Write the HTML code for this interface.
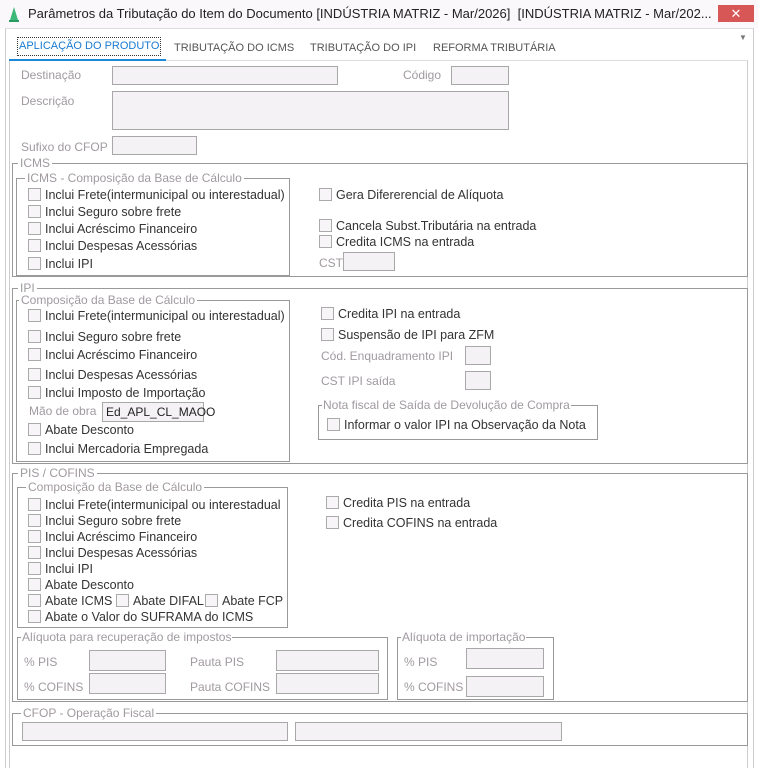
<!DOCTYPE html>
<html><head><meta charset="utf-8"><style>
*{margin:0;padding:0;box-sizing:border-box}
body{width:758px;height:768px;background:#fff;font-family:"Liberation Sans",sans-serif;font-size:12px;color:#333;position:relative;overflow:hidden}
.a{position:absolute;white-space:nowrap}
.l{color:#a09aa0}
.in{position:absolute;background:#f5f2f5;border:1px solid #a8a8a8}
.g{position:absolute;border:1px solid #999}
.gt{position:absolute;top:-8px;background:#fff;color:#a09aa0;padding:0 2px;line-height:14px}
.cb{position:absolute;white-space:nowrap;line-height:14px;font-size:12.5px}
.cb:before{content:"";display:inline-block;width:11px;height:11px;border:1px solid #aaa;background:#f7f5f7;vertical-align:-2px;margin-right:4px}
.tab{position:absolute;top:42px;color:#555;font-size:11px}
</style></head><body>
<div class="a" style="left:0;top:0;width:758px;height:28px;background:#fbf8fc"></div>
<svg class="a" style="left:8px;top:7px" width="12" height="15"><polygon points="6,0 10,13 2,13" fill="#3cb878"/><rect x="1" y="13" width="10" height="2" fill="#2a9a60"/></svg>
<div class="a" style="left:28px;top:6px;font-size:13px;color:#222">Parâmetros da Tributação do Item do Documento [INDÚSTRIA MATRIZ - Mar/2026]&nbsp; [INDÚSTRIA MATRIZ - Mar/202...</div>
<div class="a" style="left:718px;top:5px;width:36px;height:17px;background:#d75656;color:#fff;text-align:center;font-size:13px;line-height:17px">✕</div>
<div class="a" style="left:5px;top:28px;width:749px;height:740px;border-left:1px solid #ccc;border-right:1px solid #ccc;border-top:1px solid #ddd"></div>
<div class="a" style="left:9px;top:60px;width:739px;height:708px;border-left:1px solid #ccc;border-right:1px solid #ccc;border-top:1px solid #ddd"></div>
<div class="a" style="left:9px;top:59px;width:157px;height:2px;background:#1e88d8"></div>
<div class="a" style="left:17px;top:37px;border:1px dotted #333;padding:1px 1px;color:#1a7ad0;line-height:15px;font-size:11px">APLICAÇÃO DO PRODUTO</div>
<div class="tab" style="left:174px">TRIBUTAÇÃO DO ICMS</div>
<div class="tab" style="left:310px">TRIBUTAÇÃO DO IPI</div>
<div class="tab" style="left:433px">REFORMA TRIBUTÁRIA</div>
<div class="a" style="left:739px;top:33px;color:#777;font-size:8px">▼</div>

<div class="a l" style="left:21px;top:68px">Destinação</div>
<div class="in" style="left:112px;top:66px;width:226px;height:19px"></div>
<div class="a l" style="left:403px;top:68px">Código</div>
<div class="in" style="left:451px;top:66px;width:58px;height:19px"></div>
<div class="a l" style="left:21px;top:94px">Descrição</div>
<div class="in" style="left:112px;top:91px;width:397px;height:39px"></div>
<div class="a l" style="left:21px;top:140px">Sufixo do CFOP</div>
<div class="in" style="left:112px;top:136px;width:85px;height:19px"></div>

<div class="g" style="left:12px;top:163px;width:736px;height:114px"><div class="gt" style="left:5px">ICMS</div></div>
<div class="g" style="left:16px;top:178px;width:274px;height:98px"><div class="gt" style="left:8px">ICMS - Composição da Base de Cálculo</div></div>
<div class="cb" style="left:28px;top:188px">Inclui Frete(intermunicipal ou interestadual)</div>
<div class="cb" style="left:28px;top:205px">Inclui Seguro sobre frete</div>
<div class="cb" style="left:28px;top:222px">Inclui Acréscimo Financeiro</div>
<div class="cb" style="left:28px;top:239px">Inclui Despesas Acessórias</div>
<div class="cb" style="left:28px;top:257px">Inclui IPI</div>
<div class="cb" style="left:319px;top:188px">Gera Difererencial de Alíquota</div>
<div class="cb" style="left:319px;top:219px">Cancela Subst.Tributária na entrada</div>
<div class="cb" style="left:319px;top:235px">Credita ICMS na entrada</div>
<div class="a l" style="left:319px;top:256px">CST</div>
<div class="in" style="left:343px;top:252px;width:52px;height:19px"></div>

<div class="g" style="left:12px;top:288px;width:736px;height:176px"><div class="gt" style="left:5px">IPI</div></div>
<div class="g" style="left:16px;top:300px;width:274px;height:162px"><div class="gt" style="left:2px">Composição da Base de Cálculo</div></div>
<div class="cb" style="left:28px;top:309px">Inclui Frete(intermunicipal ou interestadual)</div>
<div class="cb" style="left:28px;top:330px">Inclui Seguro sobre frete</div>
<div class="cb" style="left:28px;top:348px">Inclui Acréscimo Financeiro</div>
<div class="cb" style="left:28px;top:368px">Inclui Despesas Acessórias</div>
<div class="cb" style="left:28px;top:386px">Inclui Imposto de Importação</div>
<div class="a l" style="left:29px;top:404px">Mão de obra</div>
<div class="in" style="left:102px;top:402px;width:102px;height:20px;color:#222;padding-left:3px;line-height:18px">Ed_APL_CL_MAOO</div>
<div class="cb" style="left:28px;top:423px">Abate Desconto</div>
<div class="cb" style="left:28px;top:442px">Inclui Mercadoria Empregada</div>
<div class="cb" style="left:321px;top:307px">Credita IPI na entrada</div>
<div class="cb" style="left:321px;top:328px">Suspensão de IPI para ZFM</div>
<div class="a l" style="left:321px;top:349px">Cód. Enquadramento IPI</div>
<div class="in" style="left:465px;top:346px;width:26px;height:19px"></div>
<div class="a l" style="left:321px;top:374px">CST IPI saída</div>
<div class="in" style="left:465px;top:371px;width:26px;height:19px"></div>
<div class="g" style="left:318px;top:405px;width:280px;height:35px"><div class="gt" style="left:3px;padding:0 1px">Nota fiscal de Saída de Devolução de Compra</div></div>
<div class="cb" style="left:327px;top:418px">Informar o valor IPI na Observação da Nota</div>

<div class="g" style="left:12px;top:473px;width:736px;height:229px"><div class="gt" style="left:5px">PIS / COFINS</div></div>
<div class="g" style="left:17px;top:487px;width:271px;height:141px"><div class="gt" style="left:8px">Composição da Base de Cálculo</div></div>
<div class="cb" style="left:28px;top:498px">Inclui Frete(intermunicipal ou interestadual</div>
<div class="cb" style="left:28px;top:514px">Inclui Seguro sobre frete</div>
<div class="cb" style="left:28px;top:530px">Inclui Acréscimo Financeiro</div>
<div class="cb" style="left:28px;top:546px">Inclui Despesas Acessórias</div>
<div class="cb" style="left:28px;top:562px">Inclui IPI</div>
<div class="cb" style="left:28px;top:578px">Abate Desconto</div>
<div class="cb" style="left:28px;top:594px">Abate ICMS</div>
<div class="cb" style="left:116px;top:594px">Abate DIFAL</div>
<div class="cb" style="left:205px;top:594px">Abate FCP</div>
<div class="cb" style="left:28px;top:610px">Abate o Valor do SUFRAMA do ICMS</div>
<div class="cb" style="left:326px;top:496px">Credita PIS na entrada</div>
<div class="cb" style="left:326px;top:516px">Credita COFINS na entrada</div>

<div class="g" style="left:17px;top:637px;width:371px;height:63px"><div class="gt" style="left:3px;padding:0 1px">Alíquota para recuperação de impostos</div></div>
<div class="a l" style="left:24px;top:655px">% PIS</div>
<div class="in" style="left:89px;top:650px;width:77px;height:21px"></div>
<div class="a l" style="left:24px;top:680px">% COFINS</div>
<div class="in" style="left:89px;top:673px;width:77px;height:21px"></div>
<div class="a l" style="left:190px;top:655px">Pauta PIS</div>
<div class="in" style="left:276px;top:650px;width:103px;height:21px"></div>
<div class="a l" style="left:190px;top:680px">Pauta COFINS</div>
<div class="in" style="left:276px;top:673px;width:103px;height:21px"></div>

<div class="g" style="left:397px;top:637px;width:157px;height:63px"><div class="gt" style="left:3px;padding:0 1px">Alíquota de importação</div></div>
<div class="a l" style="left:404px;top:655px">% PIS</div>
<div class="in" style="left:466px;top:648px;width:78px;height:21px"></div>
<div class="a l" style="left:404px;top:680px">% COFINS</div>
<div class="in" style="left:466px;top:676px;width:78px;height:21px"></div>

<div class="g" style="left:12px;top:713px;width:736px;height:33px"><div class="gt" style="left:8px">CFOP - Operação Fiscal</div></div>
<div class="in" style="left:22px;top:722px;width:266px;height:19px"></div>
<div class="in" style="left:295px;top:722px;width:267px;height:19px"></div>
</body></html>
